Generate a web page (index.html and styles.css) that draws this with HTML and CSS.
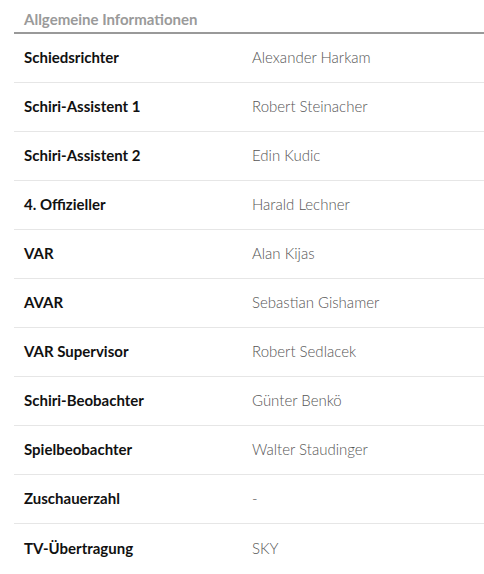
FILE: index.html
```html
<!DOCTYPE html>
<html lang="de">
<head>
<meta charset="utf-8">
<link rel="stylesheet" href="styles.css">
</head>
<body>
<section class="info">
  <h2 class="info-title">Allgemeine Informationen</h2>
  <div class="info-table">
    <div class="row"><span class="label">Schiedsrichter</span><span class="value">Alexander Harkam</span></div>
    <div class="row"><span class="label">Schiri-Assistent 1</span><span class="value">Robert Steinacher</span></div>
    <div class="row"><span class="label">Schiri-Assistent 2</span><span class="value">Edin Kudic</span></div>
    <div class="row"><span class="label">4. Offizieller</span><span class="value">Harald Lechner</span></div>
    <div class="row"><span class="label">VAR</span><span class="value">Alan Kijas</span></div>
    <div class="row"><span class="label">AVAR</span><span class="value">Sebastian Gishamer</span></div>
    <div class="row"><span class="label">VAR Supervisor</span><span class="value">Robert Sedlacek</span></div>
    <div class="row"><span class="label">Schiri-Beobachter</span><span class="value">Günter Benkö</span></div>
    <div class="row"><span class="label">Spielbeobachter</span><span class="value">Walter Staudinger</span></div>
    <div class="row"><span class="label">Zuschauerzahl</span><span class="value">-</span></div>
    <div class="row"><span class="label">TV-Übertragung</span><span class="value">SKY</span></div>
  </div>
</section>
</body>
</html>
```
FILE: styles.css
```css
html, body {
  margin: 0;
  padding: 0;
  background: #fff;
}
body {
  font-family: "Lato", "Open Sans", sans-serif;
  overflow: hidden;
}
.info {
  padding-left: 14px;
}
.info-title {
  margin: 0;
  height: 34px;
  box-sizing: border-box;
  padding: 9px 0 0 10px;
  font-size: 15px;
  line-height: 20px;
  font-weight: 700;
  color: #9a9a9a;
  border-bottom: 2px solid #999;
}
.row {
  display: grid;
  grid-template-columns: 228px 1fr;
  align-items: center;
  height: 49px;
  box-sizing: border-box;
  padding: 0 0 2px 10px;
  border-bottom: 1px solid #e6e6e6;
  font-size: 15px;
}
.row:last-child {
  border-bottom: none;
}
.label {
  font-weight: 700;
  color: #111;
}
.value {
  font-weight: 300;
  color: #555;
}
```
